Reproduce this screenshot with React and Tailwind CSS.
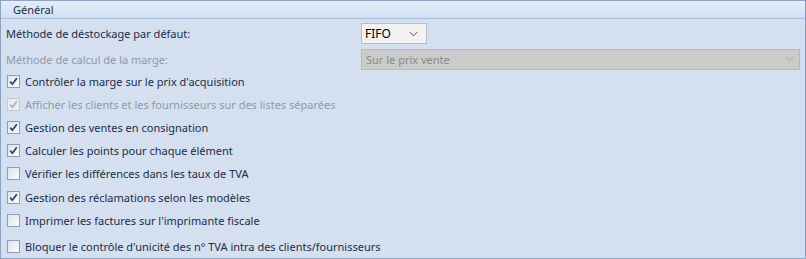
import React from 'react';

const Check = ({ checked, disabled }) => (
  <span
    className={`flex h-[13px] w-[13px] shrink-0 items-center justify-center border ${
      disabled ? 'border-[#c3cad4] bg-[#e8ecf1]' : 'border-[#8e9db3] bg-gradient-to-br from-[#dde3ea] to-[#fbfcfd]'
    }`}
  >
    {checked && (
      <svg width="9" height="9" viewBox="0 0 9 9">
        <path
          d="M1.2 4.6 L3.4 7.2 L7.8 1.2"
          fill="none"
          stroke={disabled ? '#a9b3c0' : '#2b3f5e'}
          strokeWidth="1.7"
        />
      </svg>
    )}
  </span>
);

const Chevron = ({ color }) => (
  <svg width="9" height="6" viewBox="0 0 9 6">
    <path d="M0.5 0.8 L4.5 4.8 L8.5 0.8" fill="none" stroke={color} strokeWidth="1" />
  </svg>
);

const options = [
  { label: "Contrôler la marge sur le prix d'acquisition", checked: true },
  { label: 'Afficher les clients et les fournisseurs sur des listes séparées', checked: true, disabled: true },
  { label: 'Gestion des ventes en consignation', checked: true },
  { label: 'Calculer les points pour chaque élément', checked: true },
  { label: 'Vérifier les différences dans les taux de TVA', checked: false },
  { label: 'Gestion des réclamations selon les modèles', checked: true },
  { label: "Imprimer les factures sur l'imprimante fiscale", checked: false },
];

const App = () => {
  return (
    <div
      className="h-[259px] w-[806px] overflow-hidden border border-[#8ea3c2] bg-[#d4e0f0] text-[11px] leading-[15px] text-[#1b2d47]"
      style={{ fontFamily: '"Noto Sans", sans-serif' }}
    >
      <div className="flex h-[18px] items-center border-b border-[#a9bdd8] bg-gradient-to-b from-[#e4edf9] to-[#d1dff1] pl-[12px]">
        Général
      </div>

      <div className="flex h-[29px] items-center pl-[5px] pr-[5px]">
        <span className="w-[355px]">Méthode de déstockage par défaut:</span>
        <div className="flex h-[21px] w-[66px] items-center justify-between border border-[#b4bcc6] bg-[#f2f2f2] pl-[3px] pr-[8px] text-[12px] text-black">
          <span>FIFO</span>
          <Chevron color="#555" />
        </div>
      </div>

      <div className="flex h-[22px] items-center pl-[5px] pr-[5px]">
        <span className="w-[355px] text-[#8e99a8]">Méthode de calcul de la marge:</span>
        <div className="flex h-[21px] flex-1 items-center justify-between border border-[#b8b8b8] bg-[#cbcbcb] pl-[4px] pr-[5px] text-[#8a8a8a]">
          <span>Sur le prix vente</span>
          <Chevron color="#a8a8a8" />
        </div>
      </div>

      <div className="flex flex-col pl-[6px]">
        {options.map((o, i) => (
          <div key={i} className="flex h-[23.1px] items-center gap-[5px]">
            <Check checked={o.checked} disabled={o.disabled} />
            <span className={o.disabled ? 'text-[#8e99a8]' : ''}>{o.label}</span>
          </div>
        ))}
        <div className="mt-[3px] flex h-[23px] items-center gap-[5px]">
          <Check checked={false} />
          <span>Bloquer le contrôle d'unicité des n° TVA intra des clients/fournisseurs</span>
        </div>
      </div>
    </div>
  );
};

export default App;
